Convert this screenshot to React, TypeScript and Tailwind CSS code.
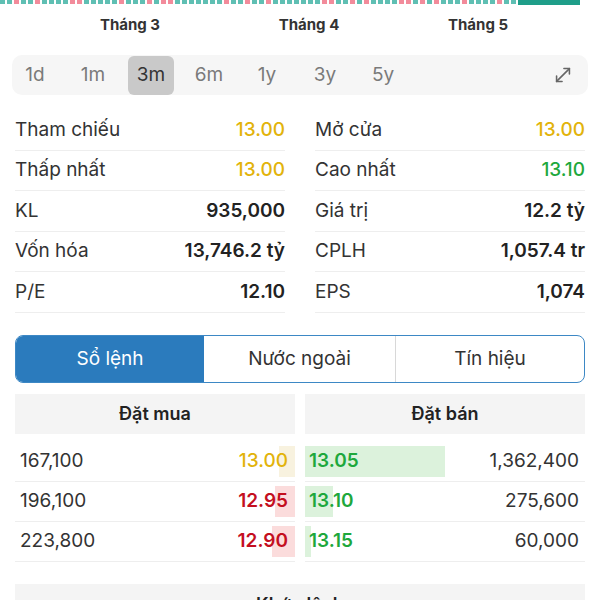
import React from "react";
import { MoveDiagonal } from "lucide-react";

const pattern = "ttpttpttttpptttttptttptpptttttttpttpttptttttttppttptpttttpptptptttpttttptt";

const stats: [string, string, string, string, string, string][] = [
  ["Tham chiếu", "13.00", "text-[#e2b30a] font-medium", "Mở cửa", "13.00", "text-[#e2b30a] font-medium"],
  ["Thấp nhất", "13.00", "text-[#e2b30a] font-medium", "Cao nhất", "13.10", "text-[#1ea83c] font-medium"],
  ["KL", "935,000", "text-[#222] font-semibold", "Giá trị", "12.2 tỷ", "text-[#222] font-semibold"],
  ["Vốn hóa", "13,746.2 tỷ", "text-[#222] font-semibold", "CPLH", "1,057.4 tr", "text-[#222] font-semibold"],
  ["P/E", "12.10", "text-[#222] font-semibold", "EPS", "1,074", "text-[#222] font-semibold"],
];

const buys = [
  { q: "167,100", p: "13.00", c: "text-[#e2b30a] font-medium", w: 16, bg: "bg-[#f8f2df]" },
  { q: "196,100", p: "12.95", c: "text-[#c40f1f] font-semibold", w: 20, bg: "bg-[#fbdcdc]" },
  { q: "223,800", p: "12.90", c: "text-[#c40f1f] font-semibold", w: 23, bg: "bg-[#fbdcdc]" },
];
const sells = [
  { q: "1,362,400", p: "13.05", w: 140 },
  { q: "275,600", p: "13.10", w: 28 },
  { q: "60,000", p: "13.15", w: 6 },
];

export default function App() {
  return (
    <div className="w-[600px] h-[600px] overflow-hidden bg-white text-[#333] font-['Inter',sans-serif]">
      {/* chart strip */}
      <div className="flex h-[5px] items-start">
        <div className="flex gap-[2px] w-[518px] overflow-hidden">
          {pattern.split("").map((ch, i) => (
            <div key={i} className={`shrink-0 w-[5px] h-[4px] ${ch === "t" ? "bg-[#5fbfb3]" : "bg-[#f28b9b]"}`} />
          ))}
        </div>
        <div className="w-[62px] h-[5px] bg-[#1f9e89]" />
      </div>
      {/* months */}
      <div className="flex h-[40px] items-center text-[15px] font-bold text-[#333]">
        <span className="ml-[80px] w-[100px] text-center">Tháng 3</span>
        <span className="ml-[79px] w-[100px] text-center">Tháng 4</span>
        <span className="ml-[69px] w-[100px] text-center">Tháng 5</span>
      </div>
      {/* period bar */}
      <div className="mt-[10px] mx-[12px] h-[40px] rounded-[10px] bg-[#f6f6f6] flex items-center text-[19px] text-[#7a7a7a]">
        <div className="flex gap-[12px]">
          {["1d", "1m", "3m", "6m", "1y", "3y", "5y"].map((p) => (
            <div
              key={p}
              className={`w-[46px] h-[39px] flex items-center justify-center rounded-[6px] ${p === "3m" ? "bg-[#c9c9c9] text-[#333]" : ""}`}
            >
              {p}
            </div>
          ))}
        </div>
        <div className="ml-auto mr-[14px] text-[#666]">
          <MoveDiagonal size={22} strokeWidth={1.7} />
        </div>
      </div>
      {/* stats */}
      <div className="mt-[15px] px-[15px] grid grid-cols-2 gap-x-[30px]">
        {stats.map((r, i) => (
          <React.Fragment key={i}>
            <div className="h-[40.5px] border-b border-[#eeeeee] flex items-center justify-between text-[19px]">
              <span className="text-[#333]">{r[0]}</span>
              <span className={r[2]}>{r[1]}</span>
            </div>
            <div className="h-[40.5px] border-b border-[#eeeeee] flex items-center justify-between text-[19px]">
              <span className="text-[#333]">{r[3]}</span>
              <span className={r[5]}>{r[4]}</span>
            </div>
          </React.Fragment>
        ))}
      </div>
      {/* tabs */}
      <div className="mt-[22px] mx-[15px] h-[48px] rounded-[8px] border-[1.5px] border-[#3d88c5] flex overflow-hidden text-[19px]">
        <div className="w-[188px] bg-[#2b7bbd] text-white flex items-center justify-center pt-[2px]">Sổ lệnh</div>
        <div className="w-[191px] flex items-center justify-center text-[#333] pt-[2px]">Nước ngoài</div>
        <div className="flex-1 border-l border-[#d8d8d8] flex items-center justify-center text-[#333] pt-[2px]">Tín hiệu</div>
      </div>
      {/* order book */}
      <div className="mt-[11px] px-[15px] grid grid-cols-2 gap-x-[10px]">
        <div>
          <div className="h-[40px] bg-[#f4f4f4] flex items-center justify-center text-[18px] font-semibold text-[#222]">Đặt mua</div>
          <div className="mt-[8px]">
            {buys.map((b, i) => (
              <div key={i} className="h-[40px] border-b border-[#eeeeee] flex items-center justify-between pl-[5px] text-[19px]">
                <span className="text-[#333]">{b.q}</span>
                <div className="relative h-[31px] flex items-center">
                  <div className={`absolute right-0 top-0 h-[31px] ${b.bg}`} style={{ width: b.w }} />
                  <span className={`relative pr-[7px] ${b.c}`}>{b.p}</span>
                </div>
              </div>
            ))}
          </div>
        </div>
        <div>
          <div className="h-[40px] bg-[#f4f4f4] flex items-center justify-center text-[18px] font-semibold text-[#222]">Đặt bán</div>
          <div className="mt-[8px]">
            {sells.map((s, i) => (
              <div key={i} className="h-[40px] border-b border-[#eeeeee] flex items-center justify-between pr-[6px] text-[19px]">
                <div className="relative h-[31px] flex items-center">
                  <div className="absolute left-0 top-0 h-[31px] bg-[#dcf2dc]" style={{ width: s.w }} />
                  <span className="relative pl-[4px] font-semibold text-[#1ea83c]">{s.p}</span>
                </div>
                <span className="text-[#333]">{s.q}</span>
              </div>
            ))}
          </div>
        </div>
      </div>
      {/* khop lenh */}
      <div className="mt-[22px] mx-[15px] h-[40px] bg-[#f4f4f4] flex justify-center pt-[7px] text-[18px] font-semibold text-[#222]">
        Khớp lệnh
      </div>
    </div>
  );
}
